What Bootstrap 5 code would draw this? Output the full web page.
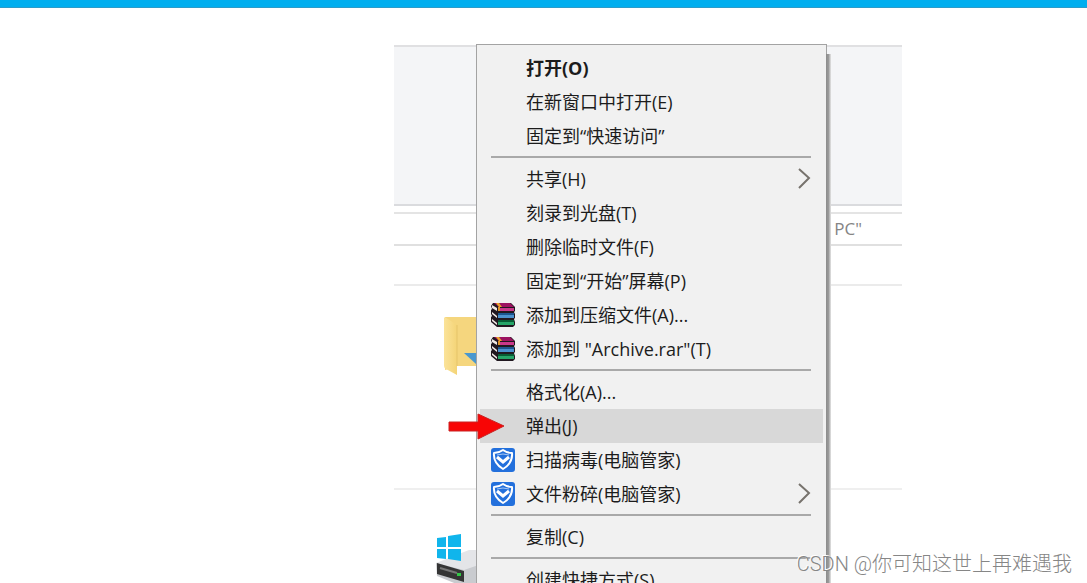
<!DOCTYPE html>
<html lang="zh-CN">
<head>
<meta charset="utf-8">
<meta name="viewport" content="width=device-width, initial-scale=1">
<title>弹出驱动器</title>
<link href="https://cdn.jsdelivr.net/npm/bootstrap@5.3.0/dist/css/bootstrap.min.css" rel="stylesheet">
<style>
  body { font-family: "Open Sans", "Noto Sans CJK SC", sans-serif; background: #fff; }
  .page { height: 100vh; }
  .top-strip { height: 8px; background: #00aeef; border-bottom: 1px solid #2c9cc9; }
  .stage { display: grid; grid-template-columns: minmax(0, 394fr) minmax(434px, 508fr) minmax(0, 185fr); padding-top: 37px; }
  .explorer { grid-column: 2; }
  .ribbon { height: 161px; background: #f4f5f7; border-top: 2px solid #e0e0e2; border-bottom: 2px solid #dadbde; }
  .address { height: 34px; margin-top: 6px; padding-right: 40px; border-top: 2px solid #e4e4e4; border-bottom: 2px solid #e0e0e0; font-size: 17px; color: #858585; }
  .toolbar-gap { height: 40px; border-bottom: 2px solid #ebebeb; }
  .folders { height: 204px; padding: 29px 0 0 50px; border-bottom: 2px solid #efefef; }
  .drives { padding: 43px 0 0 42px; }
  .menu { top: -1px; left: 82px; width: 351px; padding: 6px 3px; background: #f1f1f1; border: 1px solid #a3a3a3; }
  .menu::after { content: ""; position: absolute; top: 9px; bottom: 0; left: 100%; width: 5px; background: linear-gradient(90deg, #8c8c8c, #9a9a9a 50%, #e6e6e6); }
  .menu-row { height: 34px; padding: 0 12px 0 11px; font-size: 18px; line-height: 24px; color: #1c1c1c; text-align: left; }
  .menu-row.chosen { background: #d8d8d8; }
  .menu-icon { width: 35px; height: 26px; flex: none; }
  .menu-line { height: 2px; margin: 3px 12px 4px 11px; background: #a9a9a9; }
  .arrow { top: 368px; left: 54px; }
  .watermark { right: 15px; bottom: 4px; font: 20px/30px Roboto, "Noto Sans CJK SC", sans-serif; font-weight: 300; color: #868686; text-shadow: -1px -1px 0 #fff; }
</style>
</head>
<body>
<div class="page position-relative overflow-hidden">
  <div class="top-strip"></div>
  <main class="stage">
    <div class="explorer position-relative">
      <div class="ribbon"></div>
      <div class="address d-flex align-items-center justify-content-end"><span>PC"</span></div>
      <div class="toolbar-gap"></div>
      <div class="folders">
        <svg class="d-block" width="60" height="62" viewBox="0 0 60 62" aria-hidden="true">
          <defs><linearGradient id="fold" x2="1"><stop stop-color="#fbe39a"/><stop offset="1" stop-color="#f4d477"/></linearGradient></defs>
          <path d="M1 2H60V51H13L1 55Z" fill="#f5d67e"/>
          <path d="M1 2L13 10V60L2 54Q0 53 0 51V3Z" fill="url(#fold)"/>
          <path d="M13 10V51" stroke="#e6c46a"/>
          <path d="M20 38H44V60Z" fill="#4a98cf"/>
        </svg>
      </div>
      <div class="drives">
        <svg class="d-block" width="60" height="54" viewBox="0 0 60 54" aria-hidden="true">
          <path d="M0 30L33 17H60V54H33Z" fill="#e4e5e8"/>
          <path d="M0 30L28 37L60 26V54H28L1 43Z" fill="#c9cbcf"/>
          <path d="M1 30L28 38V49L1 41Z" fill="#353535"/>
          <path d="M4 35L21 40" stroke="#777" stroke-width="2"/>
          <rect x="21" y="40" width="4" height="3" fill="#31c744"/>
          <path d="M1 5L10 4V14H1ZM12 3L25 1V14H12ZM1 16H10V26L1 25ZM12 16H25V28L12 26Z" fill="#10b5ec"/>
        </svg>
      </div>

      <nav class="menu position-absolute d-flex flex-column" aria-label="快捷菜单">
        <button class="menu-row btn border-0 rounded-0 d-flex align-items-center fw-bold"><span class="menu-icon"></span>打开(O)</button>
        <button class="menu-row btn border-0 rounded-0 d-flex align-items-center"><span class="menu-icon"></span>在新窗口中打开(E)</button>
        <button class="menu-row btn border-0 rounded-0 d-flex align-items-center"><span class="menu-icon"></span>固定到“快速访问”</button>
        <div class="menu-line"></div>
        <button class="menu-row btn border-0 rounded-0 d-flex align-items-center"><span class="menu-icon"></span>共享(H)
          <svg class="ms-auto" width="13" height="22" viewBox="0 0 13 22" aria-hidden="true"><path d="M1 1L11 10L1 20" fill="none" stroke="#77736d" stroke-width="2"/></svg></button>
        <button class="menu-row btn border-0 rounded-0 d-flex align-items-center"><span class="menu-icon"></span>刻录到光盘(T)</button>
        <button class="menu-row btn border-0 rounded-0 d-flex align-items-center"><span class="menu-icon"></span>删除临时文件(F)</button>
        <button class="menu-row btn border-0 rounded-0 d-flex align-items-center"><span class="menu-icon"></span>固定到“开始”屏幕(P)</button>
        <button class="menu-row btn border-0 rounded-0 d-flex align-items-center"><svg class="menu-icon" viewBox="0 0 35 26" aria-hidden="true"><use href="#books"/></svg>添加到压缩文件(A)...</button>
        <button class="menu-row btn border-0 rounded-0 d-flex align-items-center"><svg class="menu-icon" viewBox="0 0 35 26" aria-hidden="true"><use href="#books"/></svg>添加到 "Archive.rar"(T)</button>
        <div class="menu-line"></div>
        <button class="menu-row btn border-0 rounded-0 d-flex align-items-center"><span class="menu-icon"></span>格式化(A)...</button>
        <button class="menu-row chosen btn border-0 rounded-0 d-flex align-items-center"><span class="menu-icon"></span>弹出(J)</button>
        <button class="menu-row btn border-0 rounded-0 d-flex align-items-center"><svg class="menu-icon" viewBox="0 0 35 26" aria-hidden="true"><use href="#shield"/></svg>扫描病毒(电脑管家)</button>
        <button class="menu-row btn border-0 rounded-0 d-flex align-items-center"><svg class="menu-icon" viewBox="0 0 35 26" aria-hidden="true"><use href="#shield"/></svg>文件粉碎(电脑管家)
          <svg class="ms-auto" width="13" height="22" viewBox="0 0 13 22" aria-hidden="true"><path d="M1 1L11 10L1 20" fill="none" stroke="#77736d" stroke-width="2"/></svg></button>
        <div class="menu-line"></div>
        <button class="menu-row btn border-0 rounded-0 d-flex align-items-center"><span class="menu-icon"></span>复制(C)</button>
        <div class="menu-line"></div>
        <button class="menu-row btn border-0 rounded-0 d-flex align-items-center"><span class="menu-icon"></span>创建快捷方式(S)</button>
      </nav>

      <svg class="arrow position-absolute" width="57" height="28" viewBox="0 0 57 28" aria-hidden="true">
        <path d="M1 9H30V1L56 13L30 26V18H1Z" fill="#f80505" stroke="#c92222" stroke-width="1"/>
      </svg>
    </div>
  </main>
  <div class="watermark position-absolute text-nowrap">CSDN @你可知这世上再难遇我</div>
</div>

<svg width="0" height="0" class="position-absolute" aria-hidden="true">
  <defs>
    <g id="books">
      <path d="M2 1H20L24 5V9L23 10L24 12V16L23 17L24 20V23L22 25H6L0 20V15L1 14L0 12V8L1 7L0 4Z" fill="#211820"/>
      <path d="M3 1H19L23 5H8Z" fill="#9c1260"/>
      <path d="M7 6H23V9H7Z" fill="#c9388a"/>
      <path d="M6 6L1 3V6L6 9Z" fill="#f1e9e6"/>
      <path d="M7 11H23V13H7Z" fill="#1b5590"/>
      <path d="M7 13H23V16H7Z" fill="#4b91cf"/>
      <path d="M6 14L1 10V12L6 16Z" fill="#f1e9e6"/>
      <path d="M7 18H23V20H7Z" fill="#085c35"/>
      <path d="M7 20H23V23H7Z" fill="#26a568"/>
      <path d="M6 21L1 17V19L6 23Z" fill="#f1e9e6"/>
      <path d="M5 1H8L11 5H8Z" fill="#e9a52a"/>
      <path d="M7 5H9V9H7Z" fill="#e0932c"/>
    </g>
    <g id="shield">
      <rect y="1" width="24" height="24" rx="3" fill="#2370dc"/>
      <path d="M3 6Q8 6 12 3Q16 6 21 6Q22 16 12 22Q2 16 3 6Z" fill="none" stroke="#fff" stroke-width="2" stroke-linejoin="round"/>
      <path d="M6 10L12 15L18 10" fill="none" stroke="#fff" stroke-width="3"/>
      <path d="M6 8Q12 6 18 8" fill="none" stroke="#a9c8f3" stroke-width="1"/>
    </g>
  </defs>
</svg>
<script src="https://cdn.jsdelivr.net/npm/bootstrap@5.3.0/dist/js/bootstrap.bundle.min.js"></script>
</body>
</html>
